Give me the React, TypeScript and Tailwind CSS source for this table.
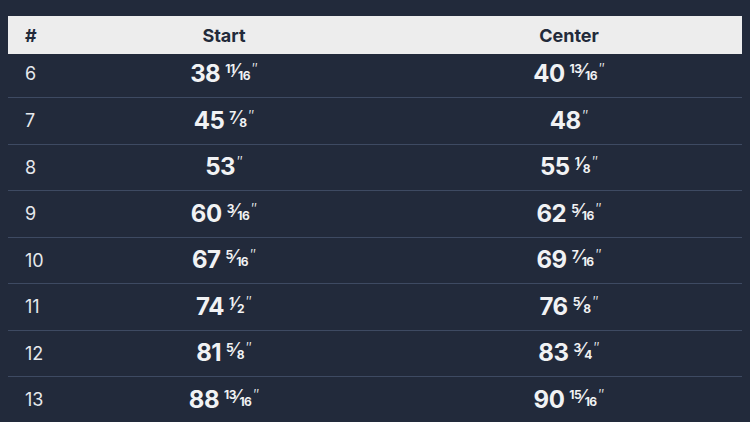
import React from "react";

type Val = { whole: string; num?: string; den?: string };

const rows: { n: string; start: Val; center: Val }[] = [
  { n: "6", start: { whole: "38", num: "11", den: "16" }, center: { whole: "40", num: "13", den: "16" } },
  { n: "7", start: { whole: "45", num: "7", den: "8" }, center: { whole: "48" } },
  { n: "8", start: { whole: "53" }, center: { whole: "55", num: "1", den: "8" } },
  { n: "9", start: { whole: "60", num: "3", den: "16" }, center: { whole: "62", num: "5", den: "16" } },
  { n: "10", start: { whole: "67", num: "5", den: "16" }, center: { whole: "69", num: "7", den: "16" } },
  { n: "11", start: { whole: "74", num: "1", den: "2" }, center: { whole: "76", num: "5", den: "8" } },
  { n: "12", start: { whole: "81", num: "5", den: "8" }, center: { whole: "83", num: "3", den: "4" } },
  { n: "13", start: { whole: "88", num: "13", den: "16" }, center: { whole: "90", num: "15", den: "16" } },
];

function Measure({ v }: { v: Val }) {
  return (
    <div className="flex items-start text-[#f1f2f4]">
      <span className="text-[24px] font-bold leading-[24px] tracking-[-0.5px]">{v.whole}</span>
      {v.num && v.den ? (
        <span className="ml-[5px] flex items-start font-bold leading-none">
          <span className="mt-[1px] text-[12px] tracking-[-0.5px]">{v.num}</span>
          <span className="text-[18px] font-normal leading-[18px]">⁄</span>
          <span className="mt-[8px] text-[12px] tracking-[-0.5px]">{v.den}</span>
        </span>
      ) : null}
      <span className="ml-[2px] text-[15px] font-light leading-none mt-[-1px]">″</span>
    </div>
  );
}

export default function App() {
  return (
    <div
      className="w-[750px] h-[422px] overflow-hidden bg-[#222a3b] pt-[16px] px-[8px]"
      style={{ fontFamily: "Inter, 'Noto Sans', sans-serif" }}
    >
      <div className="flex h-[38px] items-center bg-[#ededed] text-[#222a3a] text-[18px] font-bold">
        <div className="w-[44px] pl-[17px]">#</div>
        <div className="w-[344px] text-center">Start</div>
        <div className="flex-1 text-center">Center</div>
      </div>
      {rows.map((r, i) => (
        <div
          key={r.n}
          className={
            i === 0
              ? "flex h-[43px] items-center pb-[4px]"
              : "flex h-[46.5px] items-center border-t border-[#3e4a62]"
          }
        >
          <div className="w-[44px] pl-[17px] text-[18px] text-[#e6e8ec]">{r.n}</div>
          <div className="w-[344px] flex justify-center">
            <Measure v={r.start} />
          </div>
          <div className="flex-1 flex justify-center">
            <Measure v={r.center} />
          </div>
        </div>
      ))}
    </div>
  );
}
